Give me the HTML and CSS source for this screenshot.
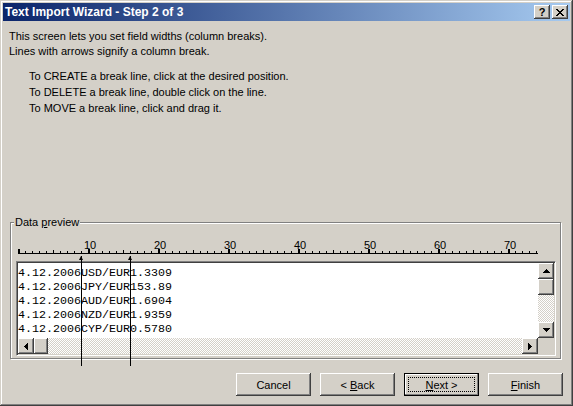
FILE: index.html
```html
<!DOCTYPE html>
<html lang="en">
  <head>
    <meta charset="utf-8">
    <title>Text Import Wizard - Step 2 of 3</title>
    <link rel="stylesheet" href="styles.css">
  </head>
  <body>
    <div class="window">
      <div class="titlebar">
        <span class="title">Text Import Wizard - Step 2 of 3</span>
        <div class="caption-buttons">
          <button class="cap-btn help">?</button>
          <button class="cap-btn">
            <svg width="8" height="7" viewBox="0 0 8 7"><path d="M0 0h2v1H0zM6 0h2v1H6zM1 1h2v1H1zM5 1h2v1H5zM2 2h4v1H2zM3 3h2v1H3zM2 4h4v1H2zM1 5h2v1H1zM5 5h2v1H5zM0 6h2v1H0zM6 6h2v1H6z"/></svg>
          </button>
        </div>
      </div>

      <div class="body">
        <p class="intro">This screen lets you set field widths (column breaks).<br>Lines with arrows signify a column break.</p>
        <p class="howto">To CREATE a break line, click at the desired position.<br>To DELETE a break line, double click on the line.<br>To MOVE a break line, click and drag it.</p>

        <fieldset class="group">
          <legend>Data <u>p</u>review</legend>
          <div class="preview">
            <!-- ruler: one tick per character, 7px each -->
            <svg class="ruler" width="520" height="20" viewBox="0 0 520 20">
              <defs>
                <pattern id="tick-minor" width="7" height="20" patternUnits="userSpaceOnUse">
                  <rect x="0" y="15" width="1" height="2"/>
                </pattern>
                <pattern id="tick-mid" width="70" height="20" patternUnits="userSpaceOnUse">
                  <rect x="35" y="14" width="1" height="3"/>
                </pattern>
                <pattern id="tick-major" width="70" height="20" patternUnits="userSpaceOnUse">
                  <rect x="0" y="13" width="2" height="4"/>
                </pattern>
              </defs>
              <rect width="520" height="20" fill="url(#tick-minor)"/>
              <rect width="520" height="20" fill="url(#tick-mid)"/>
              <rect width="520" height="20" fill="url(#tick-major)"/>
              <rect x="0" y="17" width="520" height="1"/>
              <g class="ruler-labels" text-anchor="middle">
                <text x="72" y="13">10</text>
                <text x="142" y="13">20</text>
                <text x="212" y="13">30</text>
                <text x="282" y="13">40</text>
                <text x="352" y="13">50</text>
                <text x="422" y="13">60</text>
                <text x="492" y="13">70</text>
              </g>
            </svg>

            <div class="listbox">
              <div class="rows">4.12.2006USD/EUR1.3309
4.12.2006JPY/EUR153.89
4.12.2006AUD/EUR1.6904
4.12.2006NZD/EUR1.9359
4.12.2006CYP/EUR0.5780</div>
              <div class="vscroll">
                <div class="sb-btn">
                  <svg width="7" height="4" viewBox="0 0 7 4"><path d="M3 0h1v1h1v1h1v1h1v1H0V3h1V2h1V1h1z"/></svg>
                </div>
                <div class="sb-thumb"></div>
                <div class="sb-track"></div>
                <div class="sb-btn">
                  <svg width="7" height="4" viewBox="0 0 7 4"><path d="M0 0h7v1h-1v1h-1v1h-1v1h-1v-1h-1v-1h-1v-1h-1z"/></svg>
                </div>
              </div>
              <div class="hscroll">
                <div class="sb-btn">
                  <svg width="4" height="7" viewBox="0 0 4 7"><path d="M3 0h1v7h-1v-1h-1v-1h-1v-1h-1v-1h1v-1h1v-1h1z"/></svg>
                </div>
                <div class="sb-thumb thumb-h"></div>
                <div class="sb-track"></div>
                <div class="sb-btn">
                  <svg width="4" height="7" viewBox="0 0 4 7"><path d="M0 0h1v1h1v1h1v1h1v1h-1v1h-1v1h-1v1h-1z"/></svg>
                </div>
              </div>
              <div class="corner"></div>
            </div>

            <!-- column breaks after character 9 and 16 -->
            <div class="break" style="left: 65px"></div>
            <div class="break" style="left: 114px"></div>
          </div>
        </fieldset>

        <div class="buttons">
          <button class="btn">Cancel</button>
          <button class="btn">&lt; <u>B</u>ack</button>
          <button class="btn default"><u>N</u>ext &gt;</button>
          <button class="btn"><u>F</u>inish</button>
        </div>
      </div>
    </div>
  </body>
</html>
```

FILE: styles.css
```css
html, body {
  margin: 0;
}

body {
  background: #d4d0c8;
  font: 11px "Liberation Sans", Arial, sans-serif;
  color: #000;
}

/* Raised 3D edge used by the frame and all buttons */
.window {
  width: 573px;
  height: 406px;
  box-sizing: border-box;
  padding: 3px;
  display: flex;
  flex-direction: column;
  box-shadow: inset -1px -1px #404040, inset 1px 1px #d4d0c8,
              inset -2px -2px #808080, inset 2px 2px #fff;
}

.titlebar {
  height: 18px;
  display: flex;
  align-items: center;
  justify-content: space-between;
  padding: 0 2px;
  background: linear-gradient(to right, #0a246a, #a6caf0);
}

.title {
  color: #fff;
  font-weight: bold;
  font-size: 12px;
}

.caption-buttons {
  display: flex;
  gap: 2px;
}

.cap-btn,
.sb-btn,
.sb-thumb,
.btn {
  background: #d4d0c8;
  border: 0;
  padding: 0;
  box-shadow: inset -1px -1px #404040, inset 1px 1px #fff,
              inset -2px -2px #808080, inset 2px 2px #d4d0c8;
}

.cap-btn {
  width: 16px;
  height: 14px;
  display: flex;
  align-items: center;
  justify-content: center;
  font: bold 11px "Liberation Sans", Arial, sans-serif;
  color: #000;
}

.cap-btn svg {
  display: block;
}

.body {
  flex: 1;
  display: flex;
  flex-direction: column;
  padding: 0 7px 7px 7px;
}

.intro {
  margin: 8px 0 0 -1px;
  line-height: 15px;
}

.howto {
  margin: 9px 0 0 19px;
  line-height: 16px;
}

/* Etched group box */
.group {
  margin: auto 0 0;
  width: 551px;
  min-width: 0;
  box-sizing: border-box;
  padding: 7px 4px 2px 5px;
  border: 1px solid #808080;
  box-shadow: 1px 1px 0 #fff, inset 1px 1px 0 #fff;
}

.group legend {
  margin-left: -2px;
  padding: 0 1px;
  line-height: 13px;
  background: #d4d0c8;
}

.preview {
  position: relative;
}

.ruler {
  display: block;
  margin-left: 2px;
}

.ruler-labels {
  font: 11px "Liberation Sans", Arial, sans-serif;
}

.listbox {
  width: 540px;
  height: 95px;
  box-sizing: border-box;
  margin-top: 5px;
  padding: 1px;
  border: 1px solid;
  border-color: #808080 #fff #fff #808080;
  box-shadow: inset 1px 1px #404040, inset -1px -1px #d4d0c8;
  background: #fff;
  display: grid;
  grid-template-columns: 520px 16px;
  grid-template-rows: 75px 16px;
}

.rows {
  padding-top: 3px;
  font-family: "Liberation Mono", "Courier New", monospace;
  font-size: 11.67px;
  line-height: 14px;
  white-space: pre;
  overflow: hidden;
}

.vscroll,
.hscroll {
  display: flex;
}

.vscroll {
  flex-direction: column;
}

.sb-btn {
  flex: 0 0 16px;
  width: 16px;
  height: 16px;
  display: flex;
  align-items: center;
  justify-content: center;
}

.sb-btn svg {
  display: block;
}

.sb-thumb {
  flex: 0 0 16px;
}

.thumb-h {
  flex-basis: 14px;
}

.sb-track {
  flex: 1;
  background: repeating-conic-gradient(#d4d0c8 0 25%, #fff 0 50%) 0 0 / 2px 2px;
}

.corner {
  background: #d4d0c8;
}

/* Column break marker: arrow on the ruler plus a line down the preview */
.break {
  position: absolute;
  top: 20px;
  width: 1px;
  height: 110px;
  background: #000;
}

.break::before {
  content: "";
  position: absolute;
  top: 0;
  left: -2px;
  border-left: 2.5px solid transparent;
  border-right: 2.5px solid transparent;
  border-bottom: 4px solid #000;
}

.buttons {
  display: flex;
  justify-content: flex-end;
  gap: 9px;
  margin-top: 14px;
}

.btn {
  position: relative;
  width: 75px;
  height: 23px;
  font: 11px "Liberation Sans", Arial, sans-serif;
  color: #000;
}

.btn.default {
  border: 1px solid #000;
  box-shadow: inset -1px -1px #808080, inset 1px 1px #fff;
}

.btn.default::after {
  content: "";
  position: absolute;
  inset: 3px;
  border: 1px dotted #000;
}
```
